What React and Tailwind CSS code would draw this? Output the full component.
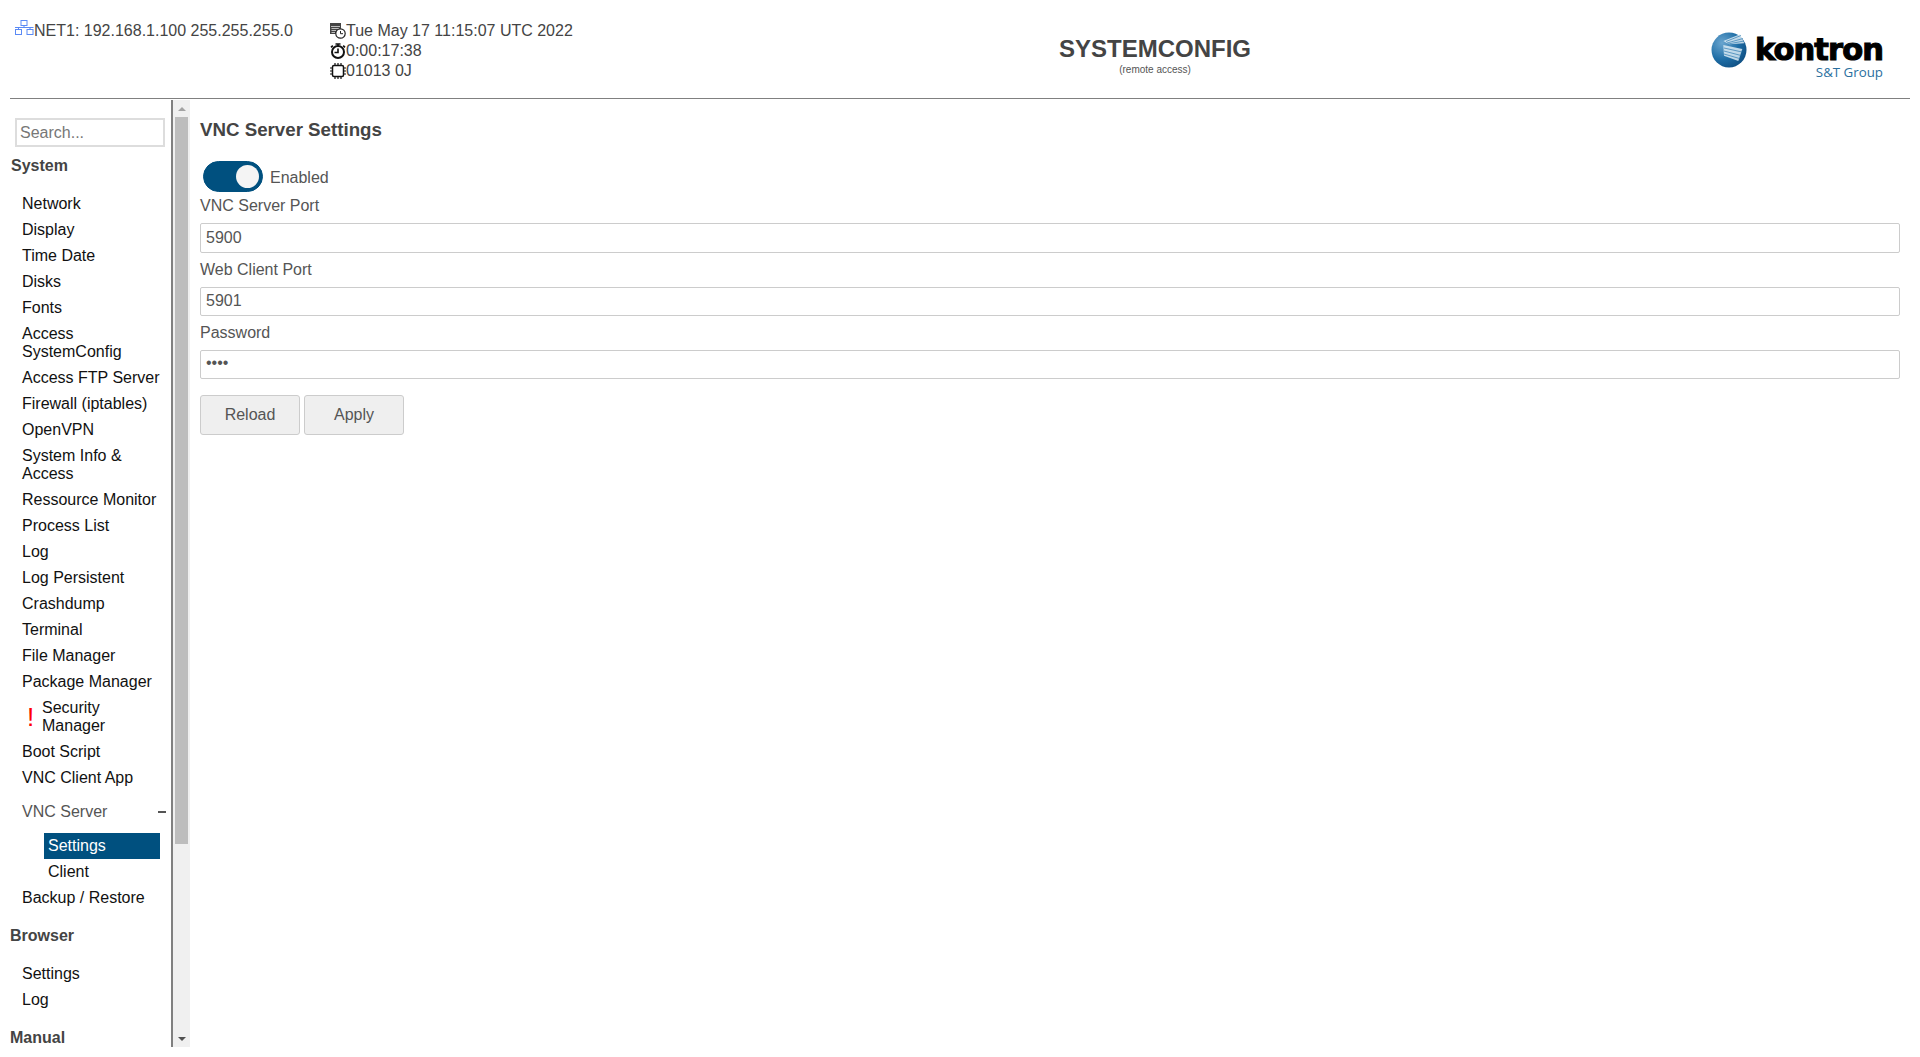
import React from 'react';

const systemItems = [
  'Network', 'Display', 'Time Date', 'Disks', 'Fonts', 'Access SystemConfig', 'Access FTP Server',
  'Firewall (iptables)', 'OpenVPN', 'System Info & Access', 'Ressource Monitor', 'Process List', 'Log',
  'Log Persistent', 'Crashdump', 'Terminal', 'File Manager', 'Package Manager',
];

const MenuItem = ({ children }) => (
  <a className="block py-1 pl-[12px] pr-2 text-[16px] leading-[18px] text-[#111]">{children}</a>
);

const NetworkIcon = () => (
  <svg width="20" height="20" viewBox="0 0 20 20" fill="none" stroke="#5b8af5" strokeWidth="1" className="-mt-px shrink-0">
    <rect x="7" y="0.5" width="6" height="5" />
    <rect x="1.5" y="9.5" width="6" height="5" />
    <rect x="13" y="9.5" width="6" height="5" />
    <path d="M10 5.5V7.5M1 7.5H19.5M4.5 7.5V9.5M16 7.5V9.5" />
  </svg>
);

const CalendarClockIcon = () => (
  <svg width="16" height="16" viewBox="0 0 16 16" className="shrink-0">
    <rect x="0" y="0" width="11" height="11" fill="#444" />
    <path d="M1 3.5H10M1.5 5.5H9M1.5 7.5H6M1.5 9.5H5" stroke="#ddd" strokeWidth="0.8" />
    <circle cx="10.5" cy="10.5" r="4.7" fill="#fff" stroke="#222" strokeWidth="1.2" />
    <path d="M10.5 8V10.7H13" fill="none" stroke="#222" strokeWidth="1" />
  </svg>
);

const StopwatchIcon = () => (
  <svg width="16" height="16" viewBox="0 0 16 16" fill="none" stroke="#111" className="shrink-0">
    <circle cx="8" cy="9" r="6" strokeWidth="2" />
    <path d="M5.5 1H10.5M8 1V3M8 5.5V9.5H4.5" strokeWidth="1.6" />
    <path d="M13.2 2.6L15 4.4M2.8 2.6L1 4.4" strokeWidth="1.6" />
  </svg>
);

const ChipIcon = () => (
  <svg width="16" height="16" viewBox="0 0 16 16" fill="none" stroke="#111" className="shrink-0">
    <rect x="2.5" y="2.5" width="11" height="11" rx="1.5" strokeWidth="1.5" />
    <path d="M5 0V2M8 0V2M11 0V2M5 14V16M8 14V16M11 14V16M0 5H2M0 8H2M0 11H2M14 5H16M14 8H16M14 11H16" strokeWidth="1.2" />
  </svg>
);

const KontronLogo = () => (
  <div className="flex w-[172px] items-start justify-between">
    <svg width="36" height="36" viewBox="0 0 36 36" className="mt-[4px] shrink-0">
      <defs>
        <radialGradient id="globe" cx="30%" cy="30%" r="85%">
          <stop offset="0%" stopColor="#6aa5cf" />
          <stop offset="55%" stopColor="#1f6ea6" />
          <stop offset="100%" stopColor="#0d4a7d" />
        </radialGradient>
      </defs>
      <circle cx="18" cy="18" r="17.5" fill="url(#globe)" />
      {/* striped wings of the mark */}
      <path d="M12.3 9L29 2.3L33.3 11.3L18 12.3Z" fill="#dcebf5" fillOpacity="0.85" />
      <path d="M12.3 13L31.3 17L27.3 29L13 23.7Z" fill="#dcebf5" fillOpacity="0.85" />
      <path d="M15 9.5L30 3.5M16 11L32 6.5M17 12L33 9M13 16L31 20M13 19L30 23.5M13 22L28.5 26.5" stroke="#2f7bb0" strokeWidth="0.7" />
    </svg>
    <div className="flex flex-col items-end">
      <span className="mt-[7px] font-['DejaVu_Sans'] text-[30.5px] leading-[30px] font-bold tracking-[-0.9px] text-black [-webkit-text-stroke:1.1px_black]">
        kontron
      </span>
      <span className="font-['Open_Sans'] text-[13.3px] leading-[14px] text-[#2a6f9e]">S&amp;T Group</span>
    </div>
  </div>
);

const Field = ({ label, value, type = 'text', className = 'h-[29.5px]' }) => (
  <div>
    <label className="block text-[16px] leading-[18px] text-[#555]">{label}</label>
    <input
      type={type}
      defaultValue={value}
      className={`mt-[8px] mb-[8px] block w-full rounded-[2px] border border-[#ccc] bg-white px-[5px] text-[16px] text-[#555] outline-none ${className}`}
    />
  </div>
);

const App = () => {
  return (
    <div className="h-[1057px] overflow-hidden bg-white px-[10px] font-['Liberation_Sans',Arial,sans-serif] text-[16px] text-[#444]">
      {/* Header */}
      <header className="flex h-[99px] border-b border-[#808080] pt-[21px]">
        <div className="flex w-[320px] items-start pl-[4px] leading-5">
          <NetworkIcon />
          <span>NET1: 192.168.1.100 255.255.255.0</span>
        </div>
        <div className="w-[500px] leading-5">
          <div className="flex items-center"><CalendarClockIcon /><span>Tue May 17 11:15:07 UTC 2022</span></div>
          <div className="flex items-center"><StopwatchIcon /><span>0:00:17:38</span></div>
          <div className="flex items-center"><ChipIcon /><span>01013 0J</span></div>
        </div>
        <div className="w-[650px] pt-[18px] text-center">
          <div className="text-[24px] leading-[19px] font-bold text-[#444]">SYSTEMCONFIG</div>
          <div className="mt-[6px] text-[10px] leading-3 text-[#555]">(remote access)</div>
        </div>
        <div className="flex flex-1 justify-end pt-[7px] pr-[27px]">
          <KontronLogo />
        </div>
      </header>

      <div className="mt-px flex h-[947px]">
        {/* Sidebar */}
        <nav className="w-[163px] shrink-0 overflow-hidden border-r-2 border-[#808080]">
          <div className="pt-[18px] pl-[5px]">
            <input
              placeholder="Search..."
              className="block h-[29px] w-[150px] border-2 border-[#ddd] px-[3px] text-[16px] text-[#444] outline-none placeholder:text-[#777]"
            />
          </div>
          <h4 className="mt-[10px] pl-px text-[16px] leading-[18px] font-bold text-[#444]">System</h4>
          <div className="mt-[16px]">
            {systemItems.map((item) => (
              <MenuItem key={item}>{item}</MenuItem>
            ))}
            <div className="flex items-center py-1 pl-[12px] text-[16px] leading-[18px] text-[#111]">
              <span className="w-[20px] pl-[5px] text-[26px] leading-none font-light text-[#f00]">!</span>
              <span className="w-[80px]">Security Manager</span>
            </div>
            <MenuItem>Boot Script</MenuItem>
            <MenuItem>VNC Client App</MenuItem>
            <div className="mt-[8px] mb-[8px] flex items-center justify-between py-1 pr-[5px] pl-[12px] leading-[18px] text-[#555]">
              <span>VNC Server</span>
              <span className="block h-[2px] w-[8px] bg-[#555]" />
            </div>
            <div className="ml-[34px] w-[116px] bg-[#00507f] py-1 pl-[4px] leading-[18px] text-white">Settings</div>
            <div className="ml-[34px] py-1 pl-[4px] leading-[18px] text-[#111]">Client</div>
            <MenuItem>Backup / Restore</MenuItem>
          </div>
          <h4 className="mt-[16px] text-[16px] leading-[18px] font-bold text-[#444]">Browser</h4>
          <div className="mt-[16px]">
            <MenuItem>Settings</MenuItem>
            <MenuItem>Log</MenuItem>
          </div>
          <h4 className="mt-[16px] text-[16px] leading-[18px] font-bold text-[#444]">Manual</h4>
        </nav>

        {/* Scrollbar */}
        <div className="flex w-[17px] shrink-0 flex-col items-center bg-[#f0f0f0] pt-[1px]">
          <div className="flex h-[16px] items-center">
            <div className="h-0 w-0 border-x-[4px] border-b-[4px] border-x-transparent border-b-[#a3a3a3]" />
          </div>
          <div className="h-[727px] w-[13px] bg-[#bdbdbd]" />
          <div className="mt-auto flex h-[16px] items-center">
            <div className="h-0 w-0 border-x-[4px] border-t-[4px] border-x-transparent border-t-[#505050]" />
          </div>
        </div>

        {/* Content */}
        <main className="flex-1 pt-[19px] pr-[10px] pl-[10px]">
          <h3 className="text-[18.72px] leading-[22px] font-bold text-[#444]">VNC Server Settings</h3>
          <div className="mt-[20px] flex items-center pl-[3px]">
            <div className="flex h-[31px] w-[60px] items-center justify-end rounded-full border border-[#00507f] bg-[#00507f] pr-[3px]">
              <div className="h-[23px] w-[23px] rounded-full bg-[#f4f4f4]" />
            </div>
            <span className="ml-[7px] translate-y-px text-[#555]">Enabled</span>
          </div>
          <div className="mt-[5px]">
            <Field label="VNC Server Port" value="5900" />
            <Field label="Web Client Port" value="5901" />
            <Field label="Password" value="vnc1" type="password" className="h-[28.5px] pb-[3px]" />
          </div>
          <div className="mt-[16px] flex gap-1">
            <button className="h-[40px] w-[100px] rounded-[3px] border border-[#ccc] bg-[#efefef] text-[16px] text-[#555]">Reload</button>
            <button className="h-[40px] w-[100px] rounded-[3px] border border-[#ccc] bg-[#efefef] text-[16px] text-[#555]">Apply</button>
          </div>
        </main>
      </div>
    </div>
  );
};

export default App;
